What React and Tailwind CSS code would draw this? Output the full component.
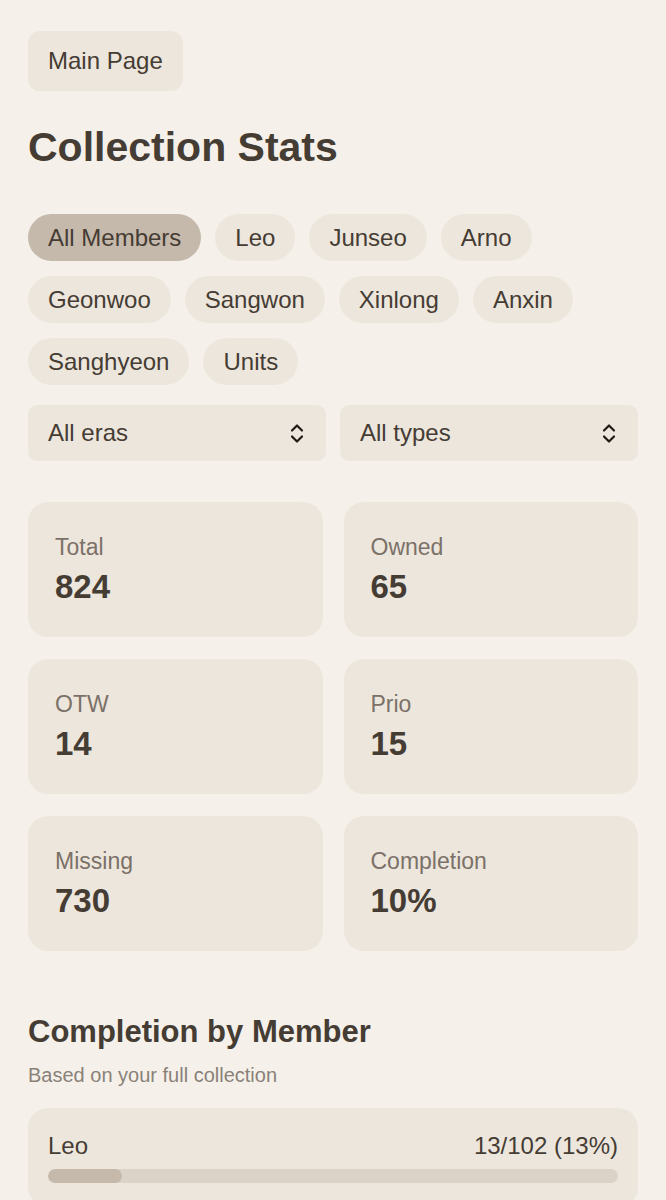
const members = [
  "All Members",
  "Leo",
  "Junseo",
  "Arno",
  "Geonwoo",
  "Sangwon",
  "Xinlong",
  "Anxin",
  "Sanghyeon",
  "Units",
];

const stats = [
  { label: "Total", value: "824" },
  { label: "Owned", value: "65" },
  { label: "OTW", value: "14" },
  { label: "Prio", value: "15" },
  { label: "Missing", value: "730" },
  { label: "Completion", value: "10%" },
];

function UpDown() {
  return (
    <svg width="16" height="21" viewBox="0 0 16 21" fill="none" stroke="#1f1a16" strokeWidth="2.2" strokeLinecap="round" strokeLinejoin="round">
      <path d="M3 7.5 L8 2.5 L13 7.5" />
      <path d="M3 13.5 L8 18.5 L13 13.5" />
    </svg>
  );
}

function SelectBox({ label }) {
  return (
    <div className="flex h-[56px] items-center justify-between rounded-[9px] bg-[#ede6dc] pl-5 pr-[21px]">
      <span className="text-[24px] text-[#453c34]">{label}</span>
      <UpDown />
    </div>
  );
}

export default function App() {
  return (
    <div
      className="min-h-[1200px] bg-[#f5f1ea] px-[28px] pt-[31px] text-[#453c34]"
      style={{ fontFamily: '"Liberation Sans", Arial, sans-serif' }}
    >
      <button
        type="button"
        className="flex h-[60px] items-center rounded-[12px] bg-[#ede6dc] px-5 text-[24px] text-[#453c34]"
      >
        Main Page
      </button>

      <h1 className="mt-[32px] text-[41px] leading-[48px] font-bold text-[#453c34]">
        Collection Stats
      </h1>

      <div className="mt-[43px] flex flex-wrap gap-x-[14px] gap-y-[15px]">
        {members.map((name, i) => (
          <span
            key={name}
            className={
              i === 0
                ? "flex h-[47px] items-center rounded-full bg-[#c5b9ab] px-5 text-[24px] text-[#453c34]"
                : "flex h-[47px] items-center rounded-full bg-[#ede6dc] px-5 text-[24px] text-[#453c34]"
            }
          >
            {name}
          </span>
        ))}
      </div>

      <div className="mt-[20px] grid grid-cols-2 gap-[14px]">
        <SelectBox label="All eras" />
        <SelectBox label="All types" />
      </div>

      <div className="mt-[41px] grid grid-cols-2 gap-x-[21px] gap-y-[22px]">
        {stats.map((s) => (
          <div key={s.label} className="h-[135px] rounded-[20px] bg-[#ede6dc] px-[27px] pt-[31px]">
            <div className="text-[23px] leading-[28px] text-[#7b7168]">{s.label}</div>
            <div className="mt-[6px] text-[33px] leading-[40px] font-bold text-[#453c34]">
              {s.value}
            </div>
          </div>
        ))}
      </div>

      <h2 className="mt-[63px] text-[31px] leading-[36px] font-bold text-[#453c34]">
        Completion by Member
      </h2>
      <p className="mt-[12px] text-[20px] leading-[26px] text-[#8a8179]">
        Based on your full collection
      </p>

      <div className="mt-[20px] rounded-[20px] bg-[#ede6dc] px-5 pt-[24px] pb-[24px]">
        <div className="flex items-center justify-between text-[24px] leading-[28px] text-[#453c34]">
          <span>Leo</span>
          <span>13/102 (13%)</span>
        </div>
        <div className="mt-[9px] h-[14px] w-full overflow-hidden rounded-full bg-[#dcd3c8]">
          <div className="h-full rounded-full bg-[#c5b9ab]" style={{ width: "13%" }} />
        </div>
      </div>
    </div>
  );
}
